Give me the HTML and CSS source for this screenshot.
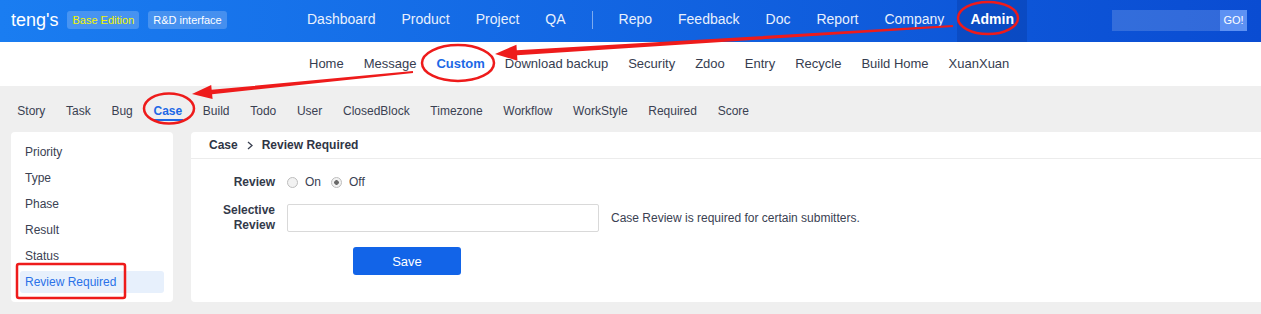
FILE: index.html
```html
<!DOCTYPE html>
<html lang="en">
<head>
  <meta charset="UTF-8" />
  <meta name="viewport" content="width=device-width, initial-scale=1.0" />
  <title>Admin - Custom - Case Review Required</title>

  <link rel="stylesheet" href="styles.css">
</head>
<body>

  <header class="topbar">
    <div class="brand">
      <span class="brand-name">teng's</span>
      <span class="badge badge-edition">Base Edition</span>
      <span class="badge">R&amp;D interface</span>
    </div>
    <nav class="main-nav">
      <a href="#">Dashboard</a>
      <a href="#">Product</a>
      <a href="#">Project</a>
      <a href="#">QA</a>
      <span class="nav-divider"></span>
      <a href="#">Repo</a>
      <a href="#">Feedback</a>
      <a href="#">Doc</a>
      <a href="#">Report</a>
      <a href="#">Company</a>
      <a href="#" class="active">Admin</a>
    </nav>
    <form class="search">
      <input type="text" />
      <button type="button">GO!</button>
    </form>
  </header>

  <nav class="sub-nav">
    <a href="#">Home</a>
    <a href="#">Message</a>
    <a href="#" class="active">Custom</a>
    <a href="#">Download backup</a>
    <a href="#">Security</a>
    <a href="#">Zdoo</a>
    <a href="#">Entry</a>
    <a href="#">Recycle</a>
    <a href="#">Build Home</a>
    <a href="#">XuanXuan</a>
  </nav>

  <nav class="module-nav">
    <a href="#">Story</a>
    <a href="#">Task</a>
    <a href="#">Bug</a>
    <a href="#" class="active">Case</a>
    <a href="#">Build</a>
    <a href="#">Todo</a>
    <a href="#">User</a>
    <a href="#">ClosedBlock</a>
    <a href="#">Timezone</a>
    <a href="#">Workflow</a>
    <a href="#">WorkStyle</a>
    <a href="#">Required</a>
    <a href="#">Score</a>
  </nav>

  <main class="content">
    <aside class="side-menu">
      <a href="#">Priority</a>
      <a href="#">Type</a>
      <a href="#">Phase</a>
      <a href="#">Result</a>
      <a href="#">Status</a>
      <a href="#" class="active">Review Required</a>
    </aside>

    <section class="panel">
      <div class="panel-header">
        <span>Case</span>
        <svg class="crumb-sep" width="6" height="9" viewBox="0 0 6 9"><polyline points="1,1 5,4.5 1,8" fill="none" stroke="#3a4050" stroke-width="1.3" /></svg>
        <span>Review Required</span>
      </div>

      <form class="form">
        <div class="form-row">
          <span class="form-label">Review</span>
          <label class="radio"><input type="radio" name="review" /> On</label>
          <label class="radio"><input type="radio" name="review" checked /> Off</label>
        </div>
        <div class="form-row row-users">
          <span class="form-label">Selective<br>Review</span>
          <input type="text" class="form-input" />
          <span class="form-help">Case Review is required for certain submitters.</span>
        </div>
        <div class="form-row row-actions">
          <button type="button" class="btn-save">Save</button>
        </div>
      </form>
    </section>
  </main>

  <!-- annotations drawn over the screenshot -->
  <svg class="marks" width="1261" height="314" viewBox="0 0 1261 314">
    <ellipse cx="988" cy="18" rx="30" ry="16" />
    <ellipse cx="458" cy="63" rx="36" ry="18" />
    <ellipse cx="169" cy="108.5" rx="25" ry="15" />
    <rect x="17" y="264" width="108" height="34" rx="2" />
    <polygon class="arrow" points="953.06,27 517.11,55.16 517.45,60.64 495,54 516.47,44.68 516.81,50.16 952.94,25" />
    <polygon class="arrow" points="413.1,73 212.12,94.21 212.59,98.99 192,94 211.21,85.05 211.68,89.83 412.9,71" />
  </svg>

</body>
</html>
```

FILE: styles.css
```css
body {
  font-family: "Liberation Sans", Arial, sans-serif;
  margin: 0;
  padding: 0;
  width: 1261px;
  height: 314px;
  overflow: hidden;
  position: relative;
  background: #efefef;
  color: #3a4152;
}
a {
  text-decoration: none;
  color: inherit;
}

/* top bar */
.topbar {
  display: flex;
  align-items: center;
  height: 42px;
  background: linear-gradient(90deg, #1a7df1, #0a4cd2);
  color: #fff;
}
.brand {
  display: flex;
  align-items: center;
  width: 294px;
  box-sizing: border-box;
  padding-left: 11px;
  padding-bottom: 2px;
}
.brand-name {
  font-size: 18px;
  margin-right: 9px;
}
.badge {
  font-size: 11px;
  line-height: 18px;
  padding: 0 5px;
  border-radius: 3px;
  background: rgba(255,255,255,0.2);
  margin-right: 9px;
}
.badge-edition {
  color: #f3f500;
}
.main-nav {
  display: flex;
  align-items: center;
  height: 42px;
}
.main-nav a {
  line-height: 39px;
  padding: 0 13px 3px;
  font-size: 14px;
  color: #e8f0fd;
}
.main-nav a.active {
  font-weight: bold;
  color: #fff;
  background: rgba(0,20,90,0.16);
}
.nav-divider {
  width: 1px;
  height: 18px;
  margin: 0 13px 2px;
  background: rgba(255,255,255,0.45);
}
.search {
  display: flex;
  margin: 0 14px 2px auto;
}
.search input {
  width: 108px;
  height: 21px;
  box-sizing: border-box;
  border: none;
  background: rgba(255,255,255,0.16);
}
.search button {
  width: 27px;
  height: 21px;
  padding: 0;
  border: none;
  background: #5d91f3;
  color: #fff;
  font-family: inherit;
  font-size: 11px;
}

/* second level menu */
.sub-nav {
  display: flex;
  height: 44px;
  background: #fff;
  padding-left: 299px;
}
.sub-nav a {
  line-height: 44px;
  padding: 0 10px;
  font-size: 13px;
  color: #363d50;
}
.sub-nav a.active {
  font-weight: bold;
  color: #1c68e6;
}

/* module tabs */
.module-nav {
  display: flex;
  height: 35px;
  padding-left: 7px;
}
.module-nav a {
  font-size: 12px;
  line-height: 19px;
  padding: 16px 10.35px 0;
  height: 19px;
  color: #3a4152;
}
.module-nav a.active {
  font-weight: bold;
  color: #1c68e6;
  background: linear-gradient(#1c68e6, #1c68e6) no-repeat 10px 100% / calc(100% - 20px) 2px;
}

/* content */
.content {
  display: flex;
  align-items: flex-start;
  gap: 18px;
  padding: 11px 0 0 11px;
}
.side-menu {
  width: 162px;
  box-sizing: border-box;
  padding: 9px;
  background: #fff;
  border-radius: 4px;
}
.side-menu a {
  display: block;
  height: 22px;
  line-height: 22px;
  padding: 0 5px;
  margin-bottom: 4px;
  font-size: 12px;
  border-radius: 3px;
}
.side-menu a:last-child {
  margin-bottom: 0;
}
.side-menu a.active {
  background: #e7f0fc;
  color: #2a72e8;
}
.panel {
  flex: 1;
  margin-right: -10px;
  background: #fff;
  border-radius: 4px;
  height: 170px;
}
.panel-header {
  display: flex;
  align-items: center;
  height: 26px;
  padding: 0 18px;
  border-bottom: 1px solid #ececec;
  font-size: 12px;
  font-weight: bold;
  color: #2f3545;
}
.crumb-sep {
  margin: 0 9px;
}
.form {
  padding: 12px 0 0 14px;
  font-size: 12px;
}
.form-row {
  display: flex;
  align-items: center;
  min-height: 22px;
}
.form-label {
  width: 70px;
  margin-right: 12px;
  text-align: right;
  font-weight: bold;
  line-height: 15px;
  color: #333a4a;
}
.radio {
  display: flex;
  align-items: center;
  margin-right: 10px;
  color: #3a4152;
}
.radio input {
  appearance: none;
  width: 11px;
  height: 11px;
  margin: 0 7px 0 0;
  border: 1px solid #bdbdbd;
  border-radius: 50%;
  background: #f2f2f2;
}
.radio input:checked {
  background: radial-gradient(#6a6a6a 0 2px, #f2f2f2 2.6px);
}
.row-users {
  margin-top: 10px;
}
.form-input {
  width: 312px;
  height: 28px;
  box-sizing: border-box;
  border: 1px solid #d9d9d9;
  border-radius: 2px;
}
.form-help {
  margin-left: 12px;
  color: #3a4152;
}
.row-actions {
  margin-top: 14px;
}
.btn-save {
  margin-left: 148px;
  width: 108px;
  height: 28px;
  border: none;
  border-radius: 3px;
  background: #1264e8;
  color: #fff;
  font-family: inherit;
  font-size: 13px;
}

/* red annotations */
.marks {
  position: absolute;
  top: 0;
  left: 0;
  pointer-events: none;
}
.marks ellipse,
.marks rect {
  fill: none;
  stroke: #ee1b1b;
  stroke-width: 2.5;
}
.marks .arrow {
  fill: #ee1b1b;
}
```
